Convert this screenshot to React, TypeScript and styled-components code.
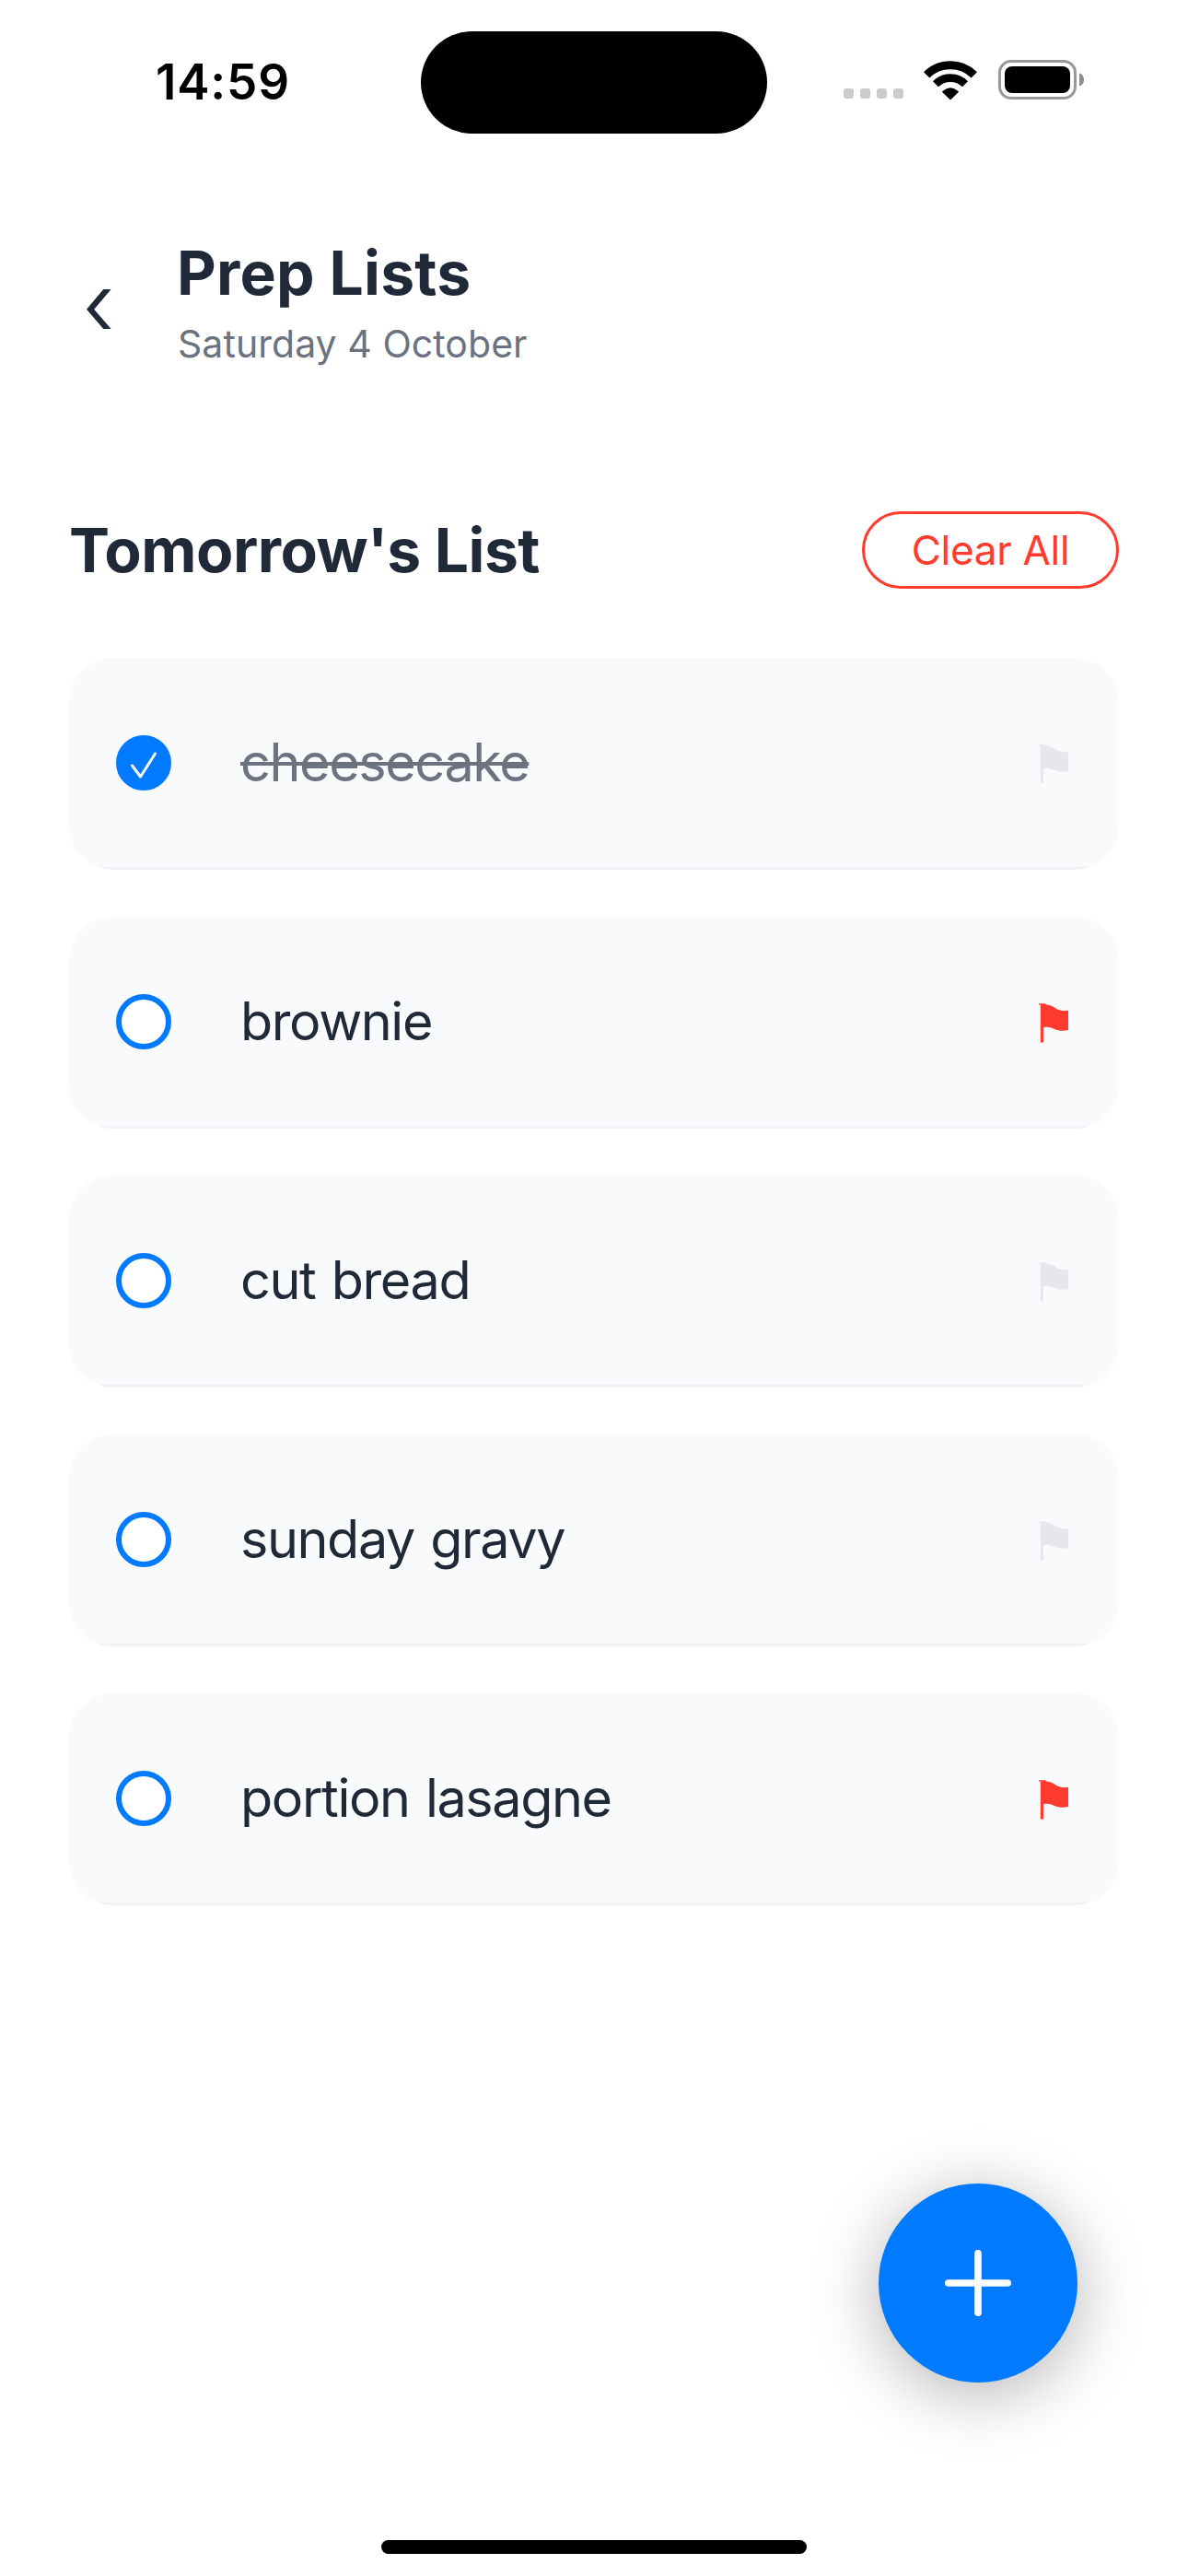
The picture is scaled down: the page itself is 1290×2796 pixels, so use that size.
import React, { useState } from 'react';
import styled, { createGlobalStyle } from 'styled-components';

const GlobalStyle = createGlobalStyle`
  * { box-sizing: border-box; }
  html, body { margin: 0; padding: 0; background: #fff; }
  body { font-family: Inter, "Liberation Sans", sans-serif; color: #1f2937; }
  button { font: inherit; color: inherit; background: none; border: 0; padding: 0; margin: 0; }
  svg { display: block; }
`;

const Screen = styled.div`
  position: relative;
  display: flex;
  flex-direction: column;
  width: 1290px;
  height: 2796px;
  background: #fff;
  overflow: hidden;
`;

const StatusBar = styled.div`
  display: grid;
  grid-template-columns: 457px 376px 457px;
  align-items: center;
  height: 177px;
`;

const Clock = styled.div`
  padding-left: 169px;
  font-size: 53px;
  font-weight: 600;
  line-height: 64px;
  letter-spacing: 0.8px;
  color: #000;
  white-space: nowrap;
`;

const Island = styled.div`
  height: 111px;
  margin-top: 1px;
  border-radius: 56px;
  background: #000;
`;

const Indicators = styled.div`
  display: flex;
  align-items: flex-end;
  height: 43px;
  margin-top: -4px;
  padding-left: 83px;
`;

const Dots = styled.div`
  display: flex;
  gap: 7px;
  margin: 0 22px 1px 0;
`;

const Dot = styled.span`
  width: 11px;
  height: 11px;
  border-radius: 3px;
  background: #cbcbcb;
`;

const Battery = styled.svg`
  margin-left: 23px;
`;

const Header = styled.header`
  display: flex;
  gap: 53px;
  height: 378px;
  padding: 79px 75px 0;
`;

const BackButton = styled.button`
  display: flex;
  justify-content: center;
  align-items: center;
  width: 64px;
  height: 158px;
`;

const Titles = styled.div`
  display: flex;
  flex-direction: column;
  gap: 12px;
`;

const Title = styled.h1`
  margin: 0;
  font-size: 66px;
  font-weight: 700;
  line-height: 80px;
  letter-spacing: 0.2px;
  white-space: nowrap;
`;

const Subtitle = styled.p`
  margin: 0 0 0 1px;
  font-size: 41px;
  line-height: 50px;
  letter-spacing: 0.05px;
  color: #6b7280;
  white-space: nowrap;
`;

const Section = styled.main`
  display: flex;
  flex-direction: column;
  padding: 0 75px;
`;

const SectionHead = styled.div`
  display: flex;
  justify-content: space-between;
  align-items: center;
  height: 84px;
  margin-bottom: 75px;
`;

const SectionTitle = styled.h2`
  margin: 0;
  font-size: 66px;
  font-weight: 700;
  line-height: 80px;
  letter-spacing: -0.55px;
  white-space: nowrap;
`;

const ClearButton = styled.button`
  width: 279px;
  height: 84px;
  border: 3px solid #ff3b30;
  border-radius: 42px;
  font-size: 44px;
  line-height: 54px;
  letter-spacing: -0.3px;
  color: #ff3b30;
  white-space: nowrap;
`;

const List = styled.ul`
  display: flex;
  flex-direction: column;
  gap: 51px;
  margin: 0;
  padding: 0;
  list-style: none;
`;

const Card = styled.li`
  display: flex;
  align-items: center;
  height: 230px;
  padding: 0 55px 0 51px;
  border-radius: 48px;
  background: linear-gradient(#f1f2f5, #f1f2f5) bottom / 100% 3px no-repeat #f9fafc;
`;

const Check = styled.button<{ $done: boolean }>`
  display: flex;
  justify-content: center;
  align-items: center;
  width: 60px;
  height: 60px;
  margin: 0 75px 2px 0;
  border: 6px solid #007aff;
  border-radius: 50%;
  background: ${(p) => (p.$done ? '#007aff' : '#fff')};
`;

const Label = styled.span<{ $done: boolean }>`
  flex: 1;
  font-size: 57.5px;
  line-height: 72px;
  letter-spacing: -1.4px;
  word-spacing: 2.5px;
  margin-bottom: 4px;
  color: ${(p) => (p.$done ? '#6b7280' : '#1f2937')};
  text-decoration: ${(p) => (p.$done ? 'line-through' : 'none')};
  text-decoration-thickness: 4px;
  white-space: nowrap;
`;

const FlagButton = styled.button<{ $on: boolean }>`
  color: ${(p) => (p.$on ? '#ff3b30' : '#e5e7eb')};
`;

const Fab = styled.button`
  position: absolute;
  right: 120px;
  bottom: 210px;
  display: flex;
  justify-content: center;
  align-items: center;
  width: 216px;
  height: 216px;
  border-radius: 50%;
  background: #007aff;
  box-shadow: 0 12px 72px rgba(0, 0, 0, 0.3);
`;

const HomeIndicator = styled.div`
  width: 462px;
  height: 15px;
  margin: auto auto 24px;
  border-radius: 8px;
  background: #000;
`;

interface Task {
  name: string;
  done: boolean;
  flagged: boolean;
}

const initialTasks: Task[] = [
  { name: 'cheesecake', done: true, flagged: false },
  { name: 'brownie', done: false, flagged: true },
  { name: 'cut bread', done: false, flagged: false },
  { name: 'sunday gravy', done: false, flagged: false },
  { name: 'portion lasagne', done: false, flagged: true },
];

const WifiIcon = () => (
  <svg width="58" height="42" viewBox="0 0 58 42" fill="none" stroke="#000">
    <path d="M3.2 15.4A36.6 36.6 0 0 1 54.8 15.4" strokeWidth="9" />
    <path d="M13 25.3A22.6 22.6 0 0 1 45 25.3" strokeWidth="8.6" />
    <path d="M21 33.6Q29 26.6 37 33.6L29 41.4Z" fill="#000" strokeWidth="1.6" strokeLinejoin="round" />
  </svg>
);

const BatteryIcon = () => (
  <Battery width="94" height="43" viewBox="0 0 94 43">
    <rect x="1.5" y="1.5" width="82" height="40" rx="12.5" fill="none" stroke="#999" strokeWidth="3" />
    <rect x="7" y="7" width="71" height="29" rx="8" fill="#000" />
    <path d="M88 14.5C91.5 15.5 93 18.2 93 21.5S91.5 27.5 88 28.5Z" fill="#8c8c8c" />
  </Battery>
);

const ChevronIcon = () => (
  <svg width="27" height="43" viewBox="0 0 27 43" fill="currentColor">
    <path d="M18.3 0H26.6L8.2 21.7L26.6 43H18.3L0 21.7Z" />
  </svg>
);

const CheckIcon = () => (
  <svg width="30" height="30" viewBox="0 0 30 30" fill="none" stroke="#fff" strokeWidth="3" strokeLinecap="round" strokeLinejoin="round" overflow="visible">
    <path d="M2.5 18L11.5 30L27.5 5" />
  </svg>
);

const FlagIcon = () => (
  <svg width="32" height="43" viewBox="0 0 32 43" fill="currentColor">
    <path d="M0 0.2H7.3V1.3C15 2 17.5 5.6 21.5 7.1C24.8 8.4 28 8.3 32 7.8V29.1C26 30.4 21.5 29.8 16.5 27.7C12.3 25.8 9 25.2 5 26.2V42.5H1.8V1.5H0Z" />
  </svg>
);

const PlusIcon = () => (
  <svg width="72" height="72" viewBox="0 0 72 72" stroke="#fff" strokeWidth="7.6" strokeLinecap="round">
    <path d="M36 3.8V68.2M3.8 36H68.2" />
  </svg>
);

export default function App() {
  const [tasks, setTasks] = useState<Task[]>(initialTasks);

  const toggle = (index: number, key: 'done' | 'flagged') =>
    setTasks((all) => all.map((t, i) => (i === index ? { ...t, [key]: !t[key] } : t)));

  return (
    <>
      <GlobalStyle />
      <Screen>
        <StatusBar>
          <Clock>14:59</Clock>
          <Island />
          <Indicators>
            <Dots>
              <Dot />
              <Dot />
              <Dot />
              <Dot />
            </Dots>
            <WifiIcon />
            <BatteryIcon />
          </Indicators>
        </StatusBar>
        <Header>
          <BackButton aria-label="Back">
            <ChevronIcon />
          </BackButton>
          <Titles>
            <Title>Prep Lists</Title>
            <Subtitle>Saturday 4 October</Subtitle>
          </Titles>
        </Header>
        <Section>
          <SectionHead>
            <SectionTitle>Tomorrow's List</SectionTitle>
            <ClearButton onClick={() => setTasks([])}>Clear All</ClearButton>
          </SectionHead>
          <List>
            {tasks.map((task, i) => (
              <Card key={task.name}>
                <Check $done={task.done} aria-label="Done" onClick={() => toggle(i, 'done')}>
                  {task.done && <CheckIcon />}
                </Check>
                <Label $done={task.done}>{task.name}</Label>
                <FlagButton $on={task.flagged} aria-label="Flag" onClick={() => toggle(i, 'flagged')}>
                  <FlagIcon />
                </FlagButton>
              </Card>
            ))}
          </List>
        </Section>
        <HomeIndicator />
        <Fab aria-label="Add">
          <PlusIcon />
        </Fab>
      </Screen>
    </>
  );
}
